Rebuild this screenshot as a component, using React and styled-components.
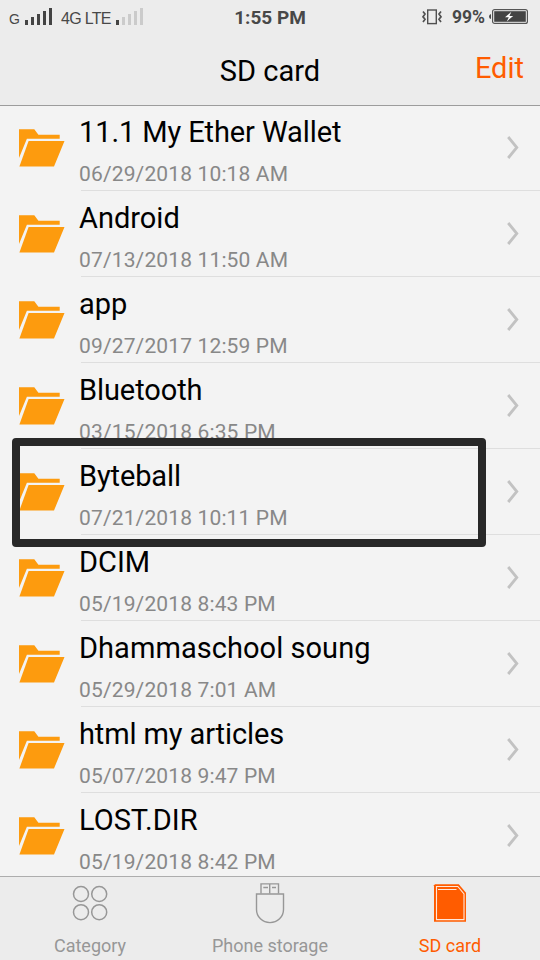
import React from "react";
import styled, { createGlobalStyle } from "styled-components";

const GlobalStyle = createGlobalStyle`
  * { box-sizing: border-box; }
  body { margin: 0; background: #f3f3f3; font-family: Roboto, sans-serif; }
  svg { display: block; flex: none; }
`;

const Screen = styled.div`
  position: relative;
  display: flex;
  flex-direction: column;
  width: 540px;
  height: 960px;
  overflow: hidden;
  background: #f3f3f3;
`;

const Header = styled.header`
  flex: none;
  height: 106px;
  background: #ececec;
  border-bottom: 1px solid #9c9c9c;
`;

const StatusBar = styled.div`
  display: grid;
  grid-template-columns: 1fr auto 1fr;
  align-items: center;
  height: 33px;
  padding: 0 12px 0 9px;
  color: #484848;
`;

const Signals = styled.div`
  display: flex;
  align-items: center;
  font-family: "Liberation Sans", sans-serif;
`;

const Network = styled.span`
  width: ${(p) => p.$width}px;
  font-size: ${(p) => p.$size}px;
  line-height: 20px;
  padding-top: 5px;
  letter-spacing: ${(p) => p.$spacing || 0}px;
  white-space: nowrap;
`;

const BarsIcon = styled.svg`
  margin-right: ${(p) => p.$gap || 0}px;
`;

const Clock = styled.span`
  margin-left: 3px;
  padding-top: 2px;
  font-size: 19px;
  font-weight: 700;
  line-height: 24px;
`;

const PowerInfo = styled.div`
  display: flex;
  align-items: center;
  justify-content: flex-end;
`;

const Percent = styled.span`
  width: 33px;
  margin: 0 4px 0 10px;
  padding-top: 1px;
  font-size: 17.5px;
  font-weight: 700;
  line-height: 24px;
  white-space: nowrap;
`;

const TitleBar = styled.div`
  display: grid;
  grid-template-columns: 1fr auto 1fr;
  align-items: center;
  height: 74px;
  padding: 0 16px;
`;

const Title = styled.h1`
  grid-column: 2;
  margin: 2px 0 0;
  font-size: 29px;
  font-weight: 400;
  line-height: 36px;
  color: #000;
`;

const EditButton = styled.button`
  justify-self: end;
  margin: 0 0 4px;
  padding: 0;
  border: 0;
  background: none;
  font: 400 29px/36px Roboto, sans-serif;
  color: #ff5c00;
`;

const FileList = styled.main`
  flex: 1;
  min-height: 0;
  margin-top: -1px;
  overflow: hidden;
`;

const FileRow = styled.div`
  display: flex;
  height: 86px;
  padding-left: 18px;
`;

const FolderIcon = styled.svg`
  margin: 23px 15px 0 0;
`;

const FileBody = styled.div`
  flex: 1;
  display: flex;
  justify-content: space-between;
  margin-left: 1px;
  padding-right: 21px;
  border-bottom: 1px solid #dedede;
`;

const FileText = styled.div`
  margin-left: -2px;
  padding-top: 7px;
  white-space: nowrap;
`;

const FileName = styled.div`
  font-size: 29px;
  line-height: 40px;
  letter-spacing: ${(p) => p.$tracking || 0}px;
  color: #000;
`;

const FileDate = styled.div`
  margin-top: 8px;
  font-size: 21px;
  line-height: 28px;
  letter-spacing: 0.14px;
  color: #888;
`;

const Chevron = styled.svg`
  margin-top: 30px;
`;

const TabBar = styled.nav`
  flex: none;
  display: grid;
  grid-template-columns: repeat(3, 1fr);
  height: 84px;
  background: #ececec;
  border-top: 1px solid #adadad;
`;

const Tab = styled.div`
  display: flex;
  flex-direction: column;
  align-items: center;
  color: ${(p) => (p.$active ? "#ff5c00" : "#979797")};
  padding-top: 5px;
`;

const TabLabel = styled.span`
  margin-top: 9px;
  font-size: 18px;
  line-height: 26px;
`;

const Highlight = styled.div`
  position: absolute;
  left: 12px;
  top: 438px;
  width: 474px;
  height: 109px;
  border: 8px solid #282828;
  border-radius: 4px;
`;

const files = [
  ["11.1 My Ether Wallet", "06/29/2018 10:18 AM", -0.1],
  ["Android", "07/13/2018 11:50 AM"],
  ["app", "09/27/2017 12:59 PM"],
  ["Bluetooth", "03/15/2018 6:35 PM", -0.08],
  ["Byteball", "07/21/2018 10:11 PM", -0.12],
  ["DCIM", "05/19/2018 8:43 PM"],
  ["Dhammaschool soung", "05/29/2018 7:01 AM", 0.05],
  ["html my articles", "05/07/2018 9:47 PM", -0.12],
  ["LOST.DIR", "05/19/2018 8:42 PM"],
];

const barHeights = [5, 8, 11, 14, 17];

function SignalBars({ level, gap }) {
  return (
    <BarsIcon width="28" height="17" viewBox="0 0 28 17" $gap={gap}>
      {barHeights.map((h, i) => (
        <rect key={h} x={i * 6} y={17 - h} width="3" height={h} fill={i < level ? "#444" : "#cbcbcb"} />
      ))}
    </BarsIcon>
  );
}

function VibrateIcon() {
  return (
    <svg width="20" height="16" viewBox="0 0 20 16" fill="none" stroke="#505050">
      <rect x="5.7" y="1" width="8.6" height="13.6" strokeWidth="1.4" />
      <path d="M1 2.5 3 5 1 7.8 3 10.3 1 13M19 2.5 17 5 19 7.8 17 10.3 19 13" strokeWidth="1.7" />
    </svg>
  );
}

function BatteryIcon() {
  return (
    <svg width="39" height="15" viewBox="0 0 39 15">
      <path d="M2 5v5Q0 9.5 0 7.5T2 5Z" fill="#444" />
      <rect x="3.6" y=".6" width="34.8" height="13.8" rx="2" fill="#f4f4f4" stroke="#555" strokeWidth="1.2" />
      <rect x="5.2" y="2.2" width="31.6" height="10.6" fill="#444" />
      <path d="M22.4 2.8 16 8.2h3.8l-2 4.2 6.4-5.5h-3.8Z" fill="#fff" />
    </svg>
  );
}

function Folder() {
  return (
    <FolderIcon width="47" height="40" viewBox="0 0 47 40" fill="#fd9b0e">
      <path d="M1 1.2H16.3L20.4 6.8H41.7V10.8H8.9L1 30Z" />
      <path d="M10.6 13.1H46.5L36 38.5H1.4Z" />
    </FolderIcon>
  );
}

function CategoryIcon() {
  return (
    <svg width="36" height="42" viewBox="0 0 36 42" fill="none" stroke="currentColor" strokeWidth="1.5">
      <circle cx="9" cy="12" r="7.5" />
      <circle cx="27.2" cy="12" r="7.5" />
      <circle cx="9" cy="30.2" r="7.5" />
      <circle cx="27.2" cy="30.2" r="7.5" />
    </svg>
  );
}

function UsbIcon() {
  return (
    <svg width="30" height="42" viewBox="0 0 30 42" fill="none" stroke="currentColor" strokeWidth="1.4">
      <path d="M6 11.5V1.9H23.5V11.5M14.7 2V11.5M8.3 5.5H13M17 5.5H21" />
      <path d="M1.5 12H28.5V27.5C28.5 35 22.5 40.6 15 40.6S1.5 35 1.5 27.5Z" />
    </svg>
  );
}

function SdIcon() {
  return (
    <svg width="34" height="42" viewBox="0 0 34 42">
      <path d="M2 2.2H25.8L33 10.8V39.8H1V3.2Z" fill="#ff5c00" />
      <path d="M3.5 4.5H24.8L31 11.9V37.6H3.5ZM5 7.5H23.5" fill="none" stroke="#ffe8dc" strokeWidth="1.1" />
    </svg>
  );
}

export default function App() {
  return (
    <>
      <GlobalStyle />
      <Screen>
        <Header>
          <StatusBar>
            <Signals>
              <Network $width={16} $size={14}>G</Network>
              <SignalBars level={5} gap={8} />
              <Network $width={55} $size={16} $spacing={-0.7}>4G LTE</Network>
              <SignalBars level={1} />
            </Signals>
            <Clock>1:55 PM</Clock>
            <PowerInfo>
              <VibrateIcon />
              <Percent>99%</Percent>
              <BatteryIcon />
            </PowerInfo>
          </StatusBar>
          <TitleBar>
            <Title>SD card</Title>
            <EditButton>Edit</EditButton>
          </TitleBar>
        </Header>
        <FileList>
          {files.map(([name, date, tracking]) => (
            <FileRow key={name}>
              <Folder />
              <FileBody>
                <FileText>
                  <FileName $tracking={tracking}>{name}</FileName>
                  <FileDate>{date}</FileDate>
                </FileText>
                <Chevron width="13" height="25" viewBox="0 0 13 25" fill="none" stroke="#c2c2c2" strokeWidth="2.8">
                  <path d="M2.2 2 10.8 12.5 2.2 23" />
                </Chevron>
              </FileBody>
            </FileRow>
          ))}
        </FileList>
        <TabBar>
          <Tab><CategoryIcon /><TabLabel>Category</TabLabel></Tab>
          <Tab><UsbIcon /><TabLabel>Phone storage</TabLabel></Tab>
          <Tab $active><SdIcon /><TabLabel>SD card</TabLabel></Tab>
        </TabBar>
        <Highlight />
      </Screen>
    </>
  );
}
